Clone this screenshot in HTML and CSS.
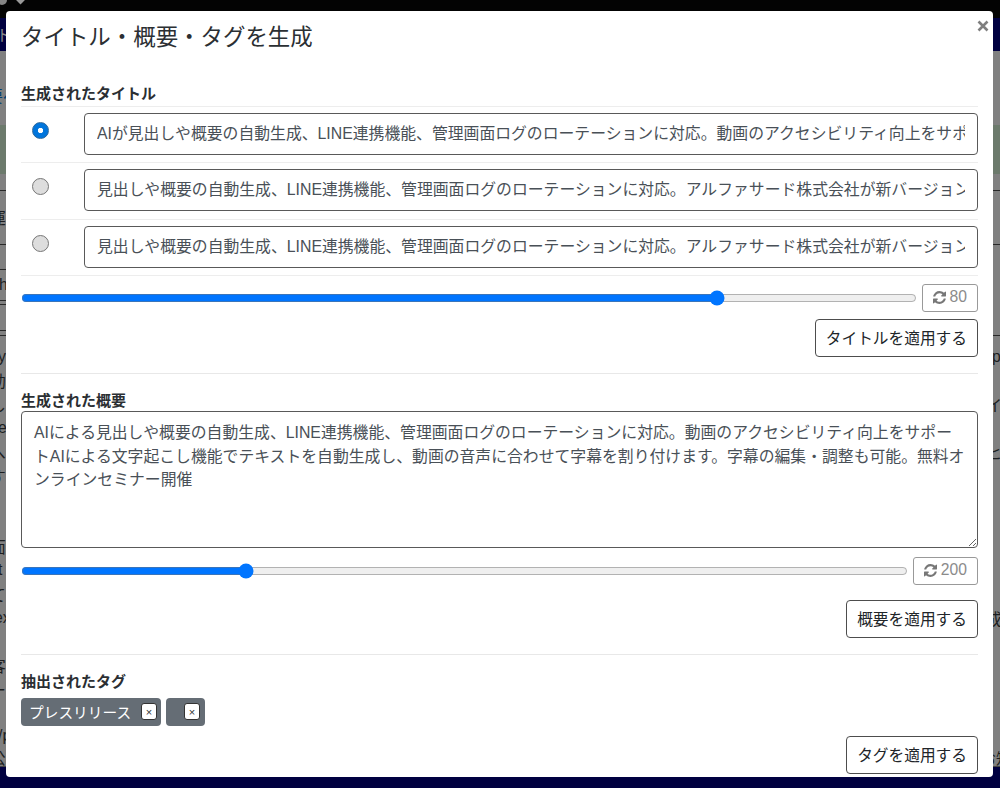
FILE: index.html
```
<!doctype html>
<html lang="ja">
<head>
<meta charset="utf-8">
<link rel="stylesheet" href="styles.css">
<title>タイトル・概要・タグを生成</title>
</head>
<body>
<svg class="symbols" width="0" height="0">
  <symbol id="refresh" viewBox="0 0 1536 1536">
    <path d="M1511 928q0 5-1 7-64 268-268 434.500T764 1536q-146 0-282.500-55T238 1324l-129 129q-19 19-45 19t-45-19-19-45V960q0-26 19-45t45-19h448q26 0 45 19t19 45-19 45l-137 137q71 66 161 102t187 36q134 0 250-65t186-179q11-17 53-117 8-23 30-23h192q13 0 22.500 9.500t9.500 22.500zm25-800v448q0 26-19 45t-45 19h-448q-26 0-45-19t-19-45 19-45l138-138Q969 256 768 256q-134 0-250 65T332 500q-11 17-53 117-8 23-30 23H50q-13 0-22.500-9.500T18 608v-7q65-268 270-434.500T768 0q146 0 284 55.500T1297 212l130-129q19-19 45-19t45 19 19 45z"/>
  </symbol>
</svg>

<div class="page">
  <div class="row bar"><span class="round"></span><span class="diamond"></span></div>
  <div class="row nav"><span class="l">ト</span></div>
  <div class="row crumb"><span class="l">要へ</span></div>
  <div class="row alert"></div>
  <div class="row gap"></div>
  <div class="row field"><span class="l">運</span></div>
  <div class="row space"></div>
  <div class="row url"><span class="l">h</span></div>
  <div class="row tools"></div>
  <div class="row rule"></div>
  <div class="row text first"><span class="l half">y</span><span class="r">p</span></div>
  <div class="row text"><span class="l">動</span></div>
  <div class="row text"><span class="l">し</span><span class="r cut">イ</span></div>
  <div class="row text"><span class="l half">e</span></div>
  <div class="row text"><span class="l">へ</span><span class="r cut">ヒ</span></div>
  <div class="row text tall"><span class="l">す</span></div>
  <div class="row text"><span class="l">面</span></div>
  <div class="row text"><span class="l half">t</span></div>
  <div class="row text"><span class="l">て</span></div>
  <div class="row text mid"><span class="l pair">ex</span><span class="r cut">成</span></div>
  <div class="row text"><span class="l">客</span></div>
  <div class="row text mid"><span class="l">ー</span></div>
  <div class="row text"><span class="l half">/p</span></div>
  <div class="row text last"><span class="l">公</span><span class="r know">お知</span></div>
  <div class="row foot"></div>
</div>

<div class="modal">
  <svg class="close" viewBox="0 0 12 12"><path d="M1.500 1.500l9 9M10.500 1.500l-9 9"/></svg>
  <h1>タイトル・概要・タグを生成</h1>

  <h2>生成されたタイトル</h2>
  <div class="choice"><input type="radio" name="title" checked><input type="text" class="control" value="AIが見出しや概要の自動生成、LINE連携機能、管理画面ログのローテーションに対応。動画のアクセシビリティ向上をサポート"></div>
  <div class="choice"><input type="radio" name="title"><input type="text" class="control" value="見出しや概要の自動生成、LINE連携機能、管理画面ログのローテーションに対応。アルファサード株式会社が新バージョン"></div>
  <div class="choice"><input type="radio" name="title"><input type="text" class="control" value="見出しや概要の自動生成、LINE連携機能、管理画面ログのローテーションに対応。アルファサード株式会社が新バージョン"></div>
  <div class="slider title-slider">
    <input type="range" min="0" max="1000" value="782">
    <button class="btn count"><svg><use href="#refresh"/></svg>80</button>
  </div>
  <div class="action"><button class="btn">タイトルを適用する</button></div>

  <hr>
  <h2 class="sub">生成された概要</h2>
  <textarea class="control">AIによる見出しや概要の自動生成、LINE連携機能、管理画面ログのローテーションに対応。動画のアクセシビリティ向上をサポートAIによる文字起こし機能でテキストを自動生成し、動画の音声に合わせて字幕を割り付けます。字幕の編集・調整も可能。無料オンラインセミナー開催</textarea>
  <div class="slider">
    <input type="range" min="0" max="1000" value="249">
    <button class="btn count"><svg><use href="#refresh"/></svg>200</button>
  </div>
  <div class="action wide"><button class="btn">概要を適用する</button></div>

  <hr>
  <h2 class="sub">抽出されたタグ</h2>
  <div class="tags">
    <span class="tag">プレスリリース<button>×</button></span>
    <span class="tag"><button>×</button></span>
  </div>
  <div class="action end"><button class="btn">タグを適用する</button></div>
</div>
</body>
</html>
```

FILE: styles.css
```
* {
    box-sizing: border-box;
}
body {
    margin: 0;
    height: 788px;
    overflow: hidden;
    background: #808080;
    color: #2b2f33;
    font-family: "Liberation Sans", "Noto Sans CJK JP", sans-serif;
    font-size: 15.84px;
}
input, button, textarea {
    font: inherit;
    margin: 0;
}
.symbols {
    position: absolute;
}

/* page behind the dialog */
.page {
    height: 788px;
    overflow: hidden;
    color: #1c1e20;
}
.row {
    display: flex;
    align-items: center;
    height: 24px;
    overflow: hidden;
    white-space: nowrap;
}
.l {
    width: 16px;
    margin-left: -10px;
}
.l.half {
    margin-left: -2px;
}
.l.pair {
    margin-left: -6px;
}
.r {
    width: 8px;
    margin-left: auto;
}
.r.cut {
    direction: rtl;
    width: 14px;
    margin-right: -2px;
}
.r.know {
    width: 20px;
    margin-right: -1px;
    padding-left: 0;
    font-size: 15px;
}
.bar {
    height: 18px;
    align-items: flex-start;
    background: #030303;
}
.round {
    width: 10px;
    height: 10px;
    margin: -5px 0 0 -3px;
    border-radius: 50%;
    background: #858585;
}
.diamond {
    width: 7px;
    height: 7px;
    margin: -4px 0 0 10px;
    background: #999;
    transform: rotate(45deg);
}
.nav {
    height: 33px;
    background: #000040;
    color: #888;
}
.nav .l {
    margin-left: -4px;
}
.crumb {
    height: 74px;
    padding-top: 14px;
    color: #003f70;
}
.crumb .l {
    margin-left: -13px;
}
.alert {
    height: 49px;
    background: #6c7a6c;
}
.gap {
    height: 16px;
}
.field {
    height: 55px;
    border: solid #292929;
    border-width: 1px 0;
}
.space {
    height: 24px;
}
.url {
    width: 500px;
    height: 32px;
    border: solid #292929;
    border-width: 1px 0;
}
.url .l {
    margin-left: -1px;
}
.tools {
    width: 500px;
    height: 27px;
    margin-top: 3px;
    border: solid #292929;
    border-width: 1px 0;
}
.rule {
    height: 1px;
    margin-top: 4px;
    background: #292929;
}
.first {
    height: 32px;
    padding-top: 10px;
}
.tall {
    height: 70px;
    padding-bottom: 46px;
}
.row.mid {
    height: 47px;
    padding-bottom: 23px;
}
.row.last {
    height: 19px;
    border-bottom: 1px solid #444;
}
.foot {
    height: 30px;
    background: #000040;
}

/* dialog */
.modal {
    position: absolute;
    top: 11px;
    left: 6px;
    width: 987px;
    height: 766px;
    padding: 0 15px;
    border-radius: 4px;
    background: #fff;
}
.close {
    position: absolute;
    top: 9px;
    right: 4px;
    width: 12px;
    height: 12px;
    stroke: #7f7f7f;
    stroke-width: 2.6;
}
h1 {
    height: 73px;
    margin: 0;
    padding-top: 13px;
    font-size: 22.45px;
    font-weight: normal;
    line-height: 28px;
}
h2 {
    height: 22px;
    margin: 0;
    font-size: 15px;
    line-height: 20px;
}
h2.sub {
    height: 20px;
}
hr {
    height: 1px;
    margin: 16px 0 17px;
    border: 0;
    background: #e8e8e8;
}
.control {
    width: 100%;
    padding: 0 12px;
    border: 1px solid #595959;
    border-radius: 4px;
    background: #fff;
    color: #495057;
}
.choice {
    display: flex;
    height: 56.33px;
    padding: 6px 0 8px;
    border-top: 1px solid #ededed;
}
.choice .control {
    flex: 1;
    height: 42px;
    padding-bottom: 3px;
}
input[type=radio] {
    appearance: none;
    width: 17px;
    height: 17px;
    margin: 9px 35px 0 11px;
    border: 1px solid #777;
    border-radius: 50%;
    background: #ddd;
}
input[type=radio]:checked {
    border-color: #2b669b;
    background: radial-gradient(circle, #fff 2.3px, #0075dc 3px);
}
.slider {
    display: flex;
    align-items: center;
    gap: 6px;
    height: 28px;
    margin-top: 9px;
}
.title-slider {
    border-top: 1px solid #ededed;
    height: 37px;
    margin-top: 0;
    padding-top: 8px;
}
.slider input {
    flex: 1;
    min-width: 0;
    margin-right: -1px;
}
.btn {
    height: 38px;
    padding: 0 10px;
    border: 1px solid #4d4d4d;
    border-radius: 4px;
    background: #fff;
    color: #212529;
    font-size: 15.7px;
}
.btn.count {
    height: 28px;
    padding: 0 10px 2px;
    border-color: #999;
    border-radius: 3px;
    color: #8b8b8b;
}
.count svg {
    width: 13px;
    height: 13px;
    margin-right: 4px;
    vertical-align: -2px;
    fill: #777;
}
.action {
    margin-top: 7px;
    text-align: right;
}
.action.wide {
    margin-top: 15px;
}
.action.end {
    margin-top: 10px;
}
textarea.control {
    display: block;
    height: 137px;
    padding: 9px 12px 7px;
    line-height: 23.75px;
}
.tags {
    display: flex;
    gap: 5px;
    height: 28px;
    margin-top: 6px;
}
.tag {
    display: flex;
    align-items: center;
    min-width: 39px;
    padding: 0 4px 0 8px;
    border-radius: 4px;
    background: #656d75;
    color: #fff;
    font-size: 14.7px;
}
.tag button {
    width: 16px;
    height: 17px;
    margin-left: 10px;
    padding: 0;
    border: 1px solid #333;
    border-radius: 3px;
    background: #fff;
    color: #333;
    font-size: 11px;
    line-height: 14px;
}
```
